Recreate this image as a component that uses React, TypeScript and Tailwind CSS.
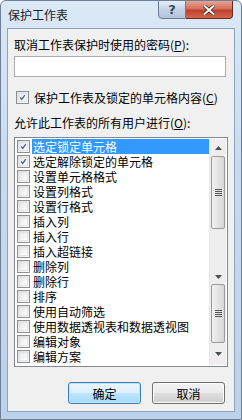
import React from "react";

const items: [string, boolean][] = [
  ["选定锁定单元格", true],
  ["选定解除锁定的单元格", true],
  ["设置单元格格式", false],
  ["设置列格式", false],
  ["设置行格式", false],
  ["插入列", false],
  ["插入行", false],
  ["插入超链接", false],
  ["删除列", false],
  ["删除行", false],
  ["排序", false],
  ["使用自动筛选", false],
  ["使用数据透视表和数据透视图", false],
  ["编辑对象", false],
  ["编辑方案", false],
];

function Check({ on }: { on: boolean }) {
  return (
    <div className="w-[13px] h-[13px] border border-[#8e8f8f] bg-[linear-gradient(135deg,#dcdcdc,#fbfbfb)] flex items-center justify-center shrink-0">
      <div className="w-[9px] h-[9px] border border-[#e4e4e4] bg-[linear-gradient(135deg,#e6e6e6,#ffffff)] flex items-center justify-center">
        {on && (
          <svg width="9" height="9" viewBox="0 0 9 9">
            <path d="M1.5 4.5 L3.5 7 L7.5 1.5" stroke="#4a5f97" strokeWidth="1.6" fill="none" />
          </svg>
        )}
      </div>
    </div>
  );
}

function Arrow({ up }: { up: boolean }) {
  return (
    <svg width="7" height="4" viewBox="0 0 7 4">
      {up ? <path d="M0 4 L3.5 0 L7 4 Z" fill="#4d4d4d" /> : <path d="M0 0 L3.5 4 L7 0 Z" fill="#4d4d4d" />}
    </svg>
  );
}

function Thumb({ h }: { h: string }) {
  return (
    <div className={`${h} mx-[1px] rounded-[2px] border border-[#9a9a9a] bg-[linear-gradient(90deg,#f0f0f0,#e0e0e0_60%,#d6d6d6)] flex items-center justify-center`}>
      <div className="flex flex-col gap-[1px]">
        <div className="w-[7px] h-[1px] bg-[#555]" />
        <div className="w-[7px] h-[1px] bg-[#555]" />
        <div className="w-[7px] h-[1px] bg-[#555]" />
        <div className="w-[7px] h-[1px] bg-[#555]" />
      </div>
    </div>
  );
}

export default function App() {
  return (
    <div
      className="w-[242px] h-[420px] bg-[linear-gradient(180deg,#dbe8f6,#c7dbef_40%,#bcd2eb)] border border-[#6e7f95] rounded-t-[6px] flex flex-col text-[12px] leading-[15px] text-black overflow-hidden"
      style={{ fontFamily: '"Noto Sans CJK SC", "Noto Sans", sans-serif' }}
    >
      <div className="h-[27px] flex items-start justify-between shrink-0">
        <div className="pl-[7px] pt-[6px] text-[12px] text-[#1e1e1e]">保护工作表</div>
        <div className="flex mr-[8px] -mt-[1px]">
          <div className="w-[28px] h-[19px] border border-[#6d7c91] rounded-bl-[4px] bg-[linear-gradient(180deg,#e6eef8,#c3d3e7_50%,#b1c4dc)] flex items-center justify-center text-[#3b4a5f] font-bold text-[13px] leading-none" style={{ fontFamily: '"DejaVu Sans", sans-serif' }}>
            ?
          </div>
          <div className="w-[47px] h-[19px] border border-l-0 border-[#6a2a22] rounded-br-[4px] bg-[linear-gradient(180deg,#e8a493,#d3705b_45%,#c0402b_55%,#d2674e)] flex items-center justify-center">
            <svg width="12" height="10" viewBox="0 0 12 10">
              <path d="M1.5 1 L10.5 9 M10.5 1 L1.5 9" stroke="#3d1d17" strokeWidth="3.4" strokeLinecap="square" />
              <path d="M1.5 1 L10.5 9 M10.5 1 L1.5 9" stroke="#ffffff" strokeWidth="2" strokeLinecap="square" />
            </svg>
          </div>
        </div>
      </div>
      <div className="mx-[6px] mb-[7px] flex-1 bg-[#f0f0f0] border border-[#8da2bd] flex flex-col px-[6px] pt-[8px]">
        <div>
          取消工作表保护时使用的密码(<span className="underline">P</span>):
        </div>
        <div className="mt-[4px] h-[21px] w-[212px] bg-white border border-[#abadb3] border-t-[#abadb3]" />
        <div className="mt-[13px] flex items-center gap-[5px] pl-[2px]">
          <Check on={true} />
          <span>
            保护工作表及锁定的单元格内容(<span className="underline">C</span>)
          </span>
        </div>
        <div className="mt-[10px]">
          允许此工作表的所有用户进行(<span className="underline">O</span>):
        </div>
        <div className="mt-[7px] w-[214px] h-[230px] bg-white border border-[#828790] flex p-[1px]">
          <div className="flex-1 flex flex-col">
            {items.map(([t, on], i) => (
              <div key={i} className="h-[15px] flex items-center">
                <div className="w-[16px] pl-[1px] flex items-center">
                  <Check on={on} />
                </div>
                <div className={`flex-1 h-[15px] pl-[1px] whitespace-nowrap ${i === 0 ? "bg-[#3399ff] text-white" : ""}`}>{t}</div>
              </div>
            ))}
          </div>
          <div className="w-[17px] bg-[#eeeeee] flex flex-col border-l border-[#e6e6e6]">
            <div className="h-[17px] flex items-center justify-center">
              <Arrow up={true} />
            </div>
            <Thumb h="h-[73px]" />
            <div className="h-[40px]" />
            <div className="h-[15px] flex items-center justify-center">
              <Arrow up={false} />
            </div>
            <Thumb h="h-[59px]" />
            <div className="flex-1 flex items-center justify-center">
              <Arrow up={false} />
            </div>
          </div>
        </div>
        <div className="mt-[15px] flex justify-end gap-[11px] pr-[3px]">
          <div className="w-[73px] h-[22px] rounded-[3px] border border-[#3c7fb1] bg-[linear-gradient(180deg,#eaf6fd,#d9f0fc_50%,#bee6fd_51%,#a7d9f5)] shadow-[inset_0_0_0_1px_#c2e2f5] flex items-center justify-center">
            确定
          </div>
          <div className="w-[73px] h-[22px] rounded-[3px] border border-[#707070] bg-[linear-gradient(180deg,#f2f2f2,#ebebeb_50%,#dddddd_51%,#cfcfcf)] shadow-[inset_0_0_0_1px_#fcfcfc] flex items-center justify-center">
            取消
          </div>
        </div>
      </div>
    </div>
  );
}
